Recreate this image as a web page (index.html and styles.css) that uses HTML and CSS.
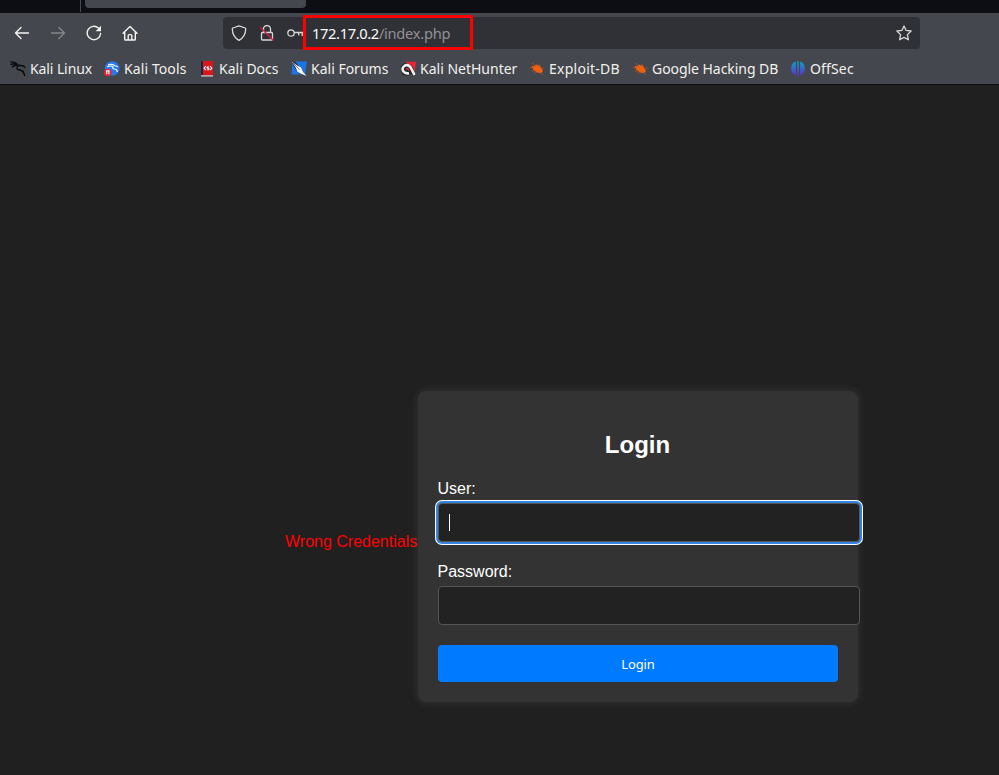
FILE: index.html
```html
<!DOCTYPE html>
<html lang="en">
<head>
<meta charset="utf-8">
<title>Login</title>
<link rel="stylesheet" href="styles.css">
</head>
<body>
<div class="browser">
  <div class="tabs"><div class="tab-edge"></div><div class="tab"></div></div>
  <nav class="toolbar">
    <div class="nav-buttons">
      <svg class="nav-icon" viewBox="0 0 16 16"><path d="M14.500 8H1.500M7 2.500 1.500 8 7 13.500"/></svg>
      <svg class="nav-icon disabled" viewBox="0 0 16 16"><path d="M1.500 8h13M9 2.500 14.500 8 9 13.500"/></svg>
      <svg class="nav-icon" viewBox="0 0 16 16"><path d="M14.600 8.500A6.700 6.700 0 1 1 12.400 3"/><path class="solid" d="M15 .8v5.400H9.600z"/></svg>
      <svg class="nav-icon home" viewBox="0 0 16 16"><path d="M1 8.200 8 1.400l7 6.800M2.700 7v7.200q0 .8.8.8h9q.8 0 .8-.8V7M6.200 15v-4.400q0-1 1-1h1.600q1 0 1 1V15"/></svg>
    </div>
    <div class="address">
      <svg class="shield" viewBox="0 0 16 16"><path d="M8 .8 14.200 3q.5.200.5.800 0 8-6.700 11.500Q1.300 11.800 1.300 3.800q0-.6.5-.8z"/></svg>
      <svg class="lock" viewBox="0 0 16 16"><path d="M4.500 7.500V4a3.500 3.500 0 0 1 7 0v3.500M3.500 7.500h9q1 0 1 1V14q0 1-1 1h-9q-1 0-1-1V8.500q0-1 1-1z"/><path class="slash" d="m1.500 2.500 13 13"/></svg>
      <svg class="key" viewBox="0 0 16 16"><circle cx="4" cy="8" r="3.200"/><path d="M7.200 7.500H16M11.700 7.500v3M15.200 7.500v3.500"/></svg>
      <div class="url"><b>172.17.0.2</b><span>/index.php</span></div>
      <svg class="star" viewBox="0 0 16 16"><path d="m8 .9 2.100 4.500 5 .6-3.700 3.600 1 5.200L8 12.400l-4.400 2.400 1-5.200L.9 6l5-.6z"/></svg>
    </div>
  </nav>
  <div class="bookmarks">
    <a class="mark linux"><svg viewBox="0 0 16 16"><path class="dragon" d="M.3.900Q4 .6 7 2.800M.5 3.600Q4 2 7.500 3.400M2 6.200Q5 3.500 9 4.200l4.500.8 1.800 1.800M9 4.200Q5 7.500 8.500 8.800q5 .300 6.300 6.200M11.500 10l2.500.5"/></svg><span>Kali Linux</span></a>
    <a class="mark tools"><svg viewBox="0 0 16 16"><circle cx="8.200" cy="7.500" r="7.300" fill="#2879ef"/><path class="white" d="M4 3.800q4-1 7 1l3 1M3 6q4-2 6 0-1 1.600 1.500 2 2.500.300 3 3"/><circle cx="3.800" cy="11.500" r="3.800" fill="#e5252c"/><path class="white" d="M2 9.900h3.700M2.800 10v3.300M4.900 10v3.300"/></svg><span>Kali Tools</span></a>
    <a class="mark docs"><svg viewBox="0 0 16 16"><path fill="#dc1519" d="M2 0h12v14.500H2z"/><path fill="#182447" d="M2 0h2v14.500H2z"/><path fill="#d9d4d6" d="M2 14.300h12v1.200H2z"/><path class="white" d="M6.700 5.200 5.100 7.200l1.600 2M11.200 5.200l1.600 2-1.600 2M7.500 6.200l3 2M9 5v4.500"/></svg><span>Kali Docs</span></a>
    <a class="mark forums"><svg viewBox="0 0 16 16"><path fill="#1876e8" d="M1.500.5H16l-2 13H.5z"/><path fill="#26303c" d="m0 .5 4 0 8 9 1 5-6-2.500z"/><path fill="#f3f4f3" d="m.5.500 5 3.500 4.500 2.500 2.500 5 3 3.500-5-2L6.500 11 4.500 6z"/><path stroke="#35516b" stroke-width=".7" d="m2 2 6.500 6.500"/></svg><span>Kali Forums</span></a>
    <a class="mark hunter"><svg viewBox="0 0 16 16"><path fill="#f02430" d="M6 .8h10l-1.500 10.500z"/><path fill="#29292e" d="M.5 6Q3 1.500 7 2.500q6 1 7 7l1.500 5-5-1-3 1.500-5-1z"/><path fill="none" stroke="#f6eef0" stroke-width="2.600" d="m14.500 14-2.500-5Q9.500 3 5 4.500q-4 2.500-1.500 6Q5.500 13 9 12.200"/><path fill="none" stroke="#dc2434" stroke-width="1.500" d="M6 8q2-1 3 1.500"/></svg><span>Kali NetHunter</span></a>
    <a class="mark exploit"><svg viewBox="0 0 16 16"><path class="bug" d="m2.500 5 2.700.3L7 3.500l4 1.500 2 3 1 2-2 2.300-4-.8L4.500 9z"/><path class="legs" d="m3 2 3.500 3M.8 6.500h4M3 10.500l3-1M9.500 2.500l2 3M12.500 7.500 15.500 7M7.500 11.500l-2 1M11.500 11l2.500 3"/></svg><span>Exploit-DB</span></a>
    <a class="mark google"><svg viewBox="0 0 16 16"><path class="bug" d="m2.500 5 2.700.3L7 3.500l4 1.500 2 3 1 2-2 2.300-4-.8L4.500 9z"/><path class="legs" d="m3 2 3.500 3M.8 6.500h4M3 10.500l3-1M9.500 2.500l2 3M12.500 7.500 15.500 7M7.500 11.500l-2 1M11.500 11l2.500 3"/></svg><span>Google Hacking DB</span></a>
    <a class="mark offsec"><svg viewBox="0 0 16 16"><defs><linearGradient id="violet" gradientUnits="userSpaceOnUse" x1="0" y1="0" x2="0" y2="16"><stop offset="0" stop-color="#08a5cc"/><stop offset="1" stop-color="#6526ce"/></linearGradient></defs><path fill="url(#violet)" d="M5.900.6v13.700A7.300 7.300 0 0 1 5.900.600zM7.200.3h1.600v15.200H7.200zM10.100.600v13.700a7.300 7.300 0 0 0 0-13.700z"/></svg><span>OffSec</span></a>
  </div>
</div>
<main class="page">
  <p class="error">Wrong Credentials</p>
  <form class="card">
    <h2>Login</h2>
    <label for="user">User:</label>
    <div id="user" class="field focused"><span class="caret"></span></div>
    <label for="password">Password:</label>
    <div id="password" class="field"></div>
    <button type="button">Login</button>
  </form>
</main>
<div class="annotation"></div>
</body>
</html>
```
FILE: styles.css
```css
* { box-sizing: border-box; }
body { margin: 0; height: 775px; overflow: hidden; background: #202020; color: #fff; font-family: "Liberation Sans", sans-serif; }
svg { display: block; flex: none; }
.browser { height: 85px; background: #45474e; border-bottom: 1px solid #0d0e13; font-family: "Noto Sans", sans-serif; color: #f1f1ec; }
.tabs { height: 13px; background: #0d0e13; display: flex; }
.tab-edge { width: 81px; height: 12px; border-right: 1px solid #4a4b50; }
.tab { margin-left: 4px; width: 221px; height: 8px; background: #45474e; border-radius: 0 0 4px 4px; }
.toolbar { height: 41px; padding-top: 4px; display: flex; }
.nav-buttons { width: 223px; padding: 8px 0 0 14px; display: flex; gap: 20px; }
.nav-icon { width: 16px; height: 16px; fill: none; stroke: #f3f3ef; stroke-width: 1.4; stroke-linecap: round; stroke-linejoin: round; }
.home { margin-left: -0.5px; }
.disabled { stroke: #858689; }
.solid { fill: #f3f3ef; stroke: none; }
.address { width: 697px; height: 32px; background: #303136; border-radius: 4px; display: flex; align-items: center; padding-left: 8px; }
.address svg { width: 16px; height: 16px; fill: none; stroke: #d8d8d5; stroke-width: 1.3; stroke-linejoin: round; }
.address .lock { margin-left: 12px; }
.address .key { margin-left: 12px; }
.address .slash { stroke: #e21846; }
.url { margin-left: 9px; font-size: 14.667px; line-height: 20px; letter-spacing: -.27px; color: #909194; width: 139px; white-space: nowrap; }
.url b { font-weight: 400; color: #fbfbfb; letter-spacing: -.36px; }
.address .star { margin-left: 445px; }
.bookmarks { height: 30px; padding-left: 10px; display: flex; align-items: center; font-size: 14px; line-height: 20px; }
.mark { display: flex; align-items: center; gap: 4px; white-space: nowrap; flex: none; }
.mark svg { width: 16px; height: 16px; }
.linux { width: 94px; letter-spacing: -.1px; }
.tools { width: 95px; letter-spacing: .1px; }
.docs { width: 92px; }
.forums { width: 109px; }
.hunter { width: 129px; }
.exploit { width: 103px; letter-spacing: .25px; }
.google { width: 158px; letter-spacing: -.05px; }
.offsec { width: 64px; letter-spacing: .15px; }
.dragon { fill: none; stroke: #08090c; stroke-width: 1.4; }
.white { fill: none; stroke: #edf5fc; stroke-width: 1.2; }
.bug { fill: #ed600d; }
.legs { stroke: #b95827; stroke-width: .7; fill: none; }
.page { height: 690px; padding: 306px 0 0 285px; display: flex; align-items: flex-start; }
.error { margin: 142px 0 0; width: 133px; color: #f00; font-size: 16px; line-height: 18px; white-space: nowrap; }
.card { width: 440px; height: 311px; padding: 20px; border-radius: 8px; background: #333; box-shadow: 0 0 10px rgba(255,255,255,.1); }
h2 { margin: 20px 1px 20px 0; font-size: 24px; line-height: 28px; text-align: center; }
label { display: block; margin-left: -.5px; padding-top: 1px; font-size: 16px; line-height: 18px; margin-bottom: 5px; }
.field { width: 422px; height: 39px; margin-bottom: 20px; padding: 10px; border: 1px solid #555; border-radius: 4px; background: #222; }
.focused { box-shadow: 0 0 0 2px #3584e4, 0 0 0 3px #fff; }
.caret { display: block; width: 1px; height: 17px; background: #fff; }
button { display: block; width: 400px; height: 37px; padding: 0; border: 0; border-radius: 4px; background: #007bff; color: #fff; font: 13px/18px "Noto Sans", sans-serif; letter-spacing: -.1px; }
.annotation { position: absolute; left: 303px; top: 15px; width: 170px; height: 35px; border: 3px solid #f00; }
```
